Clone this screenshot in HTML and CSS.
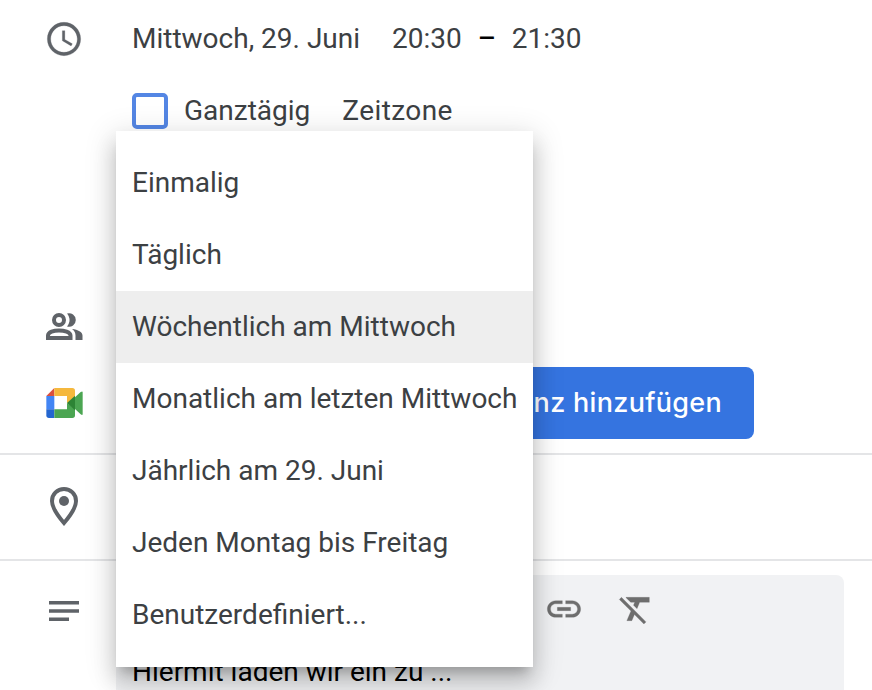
FILE: index.html
```html
<!DOCTYPE html>
<html lang="de">
<head>
<meta charset="utf-8">
<title>Termin</title>
<link rel="stylesheet" href="styles.css">
</head>
<body>
<main class="event">
  <section class="row when">
    <div class="icon"><svg class="bold" width="40" height="40" viewBox="0 0 24 24"><path d="M11.99 2C6.47 2 2 6.48 2 12s4.47 10 9.99 10C17.52 22 22 17.52 22 12S17.52 2 11.99 2zM12 20c-4.42 0-8-3.58-8-8s3.58-8 8-8 8 3.58 8 8-3.58 8-8 8z"/><path d="M12.5 7H11v6l5.25 3.15.75-1.23-4.5-2.67z"/></svg></div>
    <div class="content">
      <div class="times"><span class="date">Mittwoch, 29. Juni</span><span>20:30</span><span class="dash">–</span><span>21:30</span></div>
      <div class="options"><span class="checkbox"></span><span class="allday">Ganztägig</span><span class="zone">Zeitzone</span></div>
    </div>
  </section>
  <section class="row guests">
    <div class="icon"><svg width="37" height="27" viewBox="0 0 37 27"><g fill="none" stroke="#5f6368" stroke-width="4"><circle cx="13" cy="7" r="5"/><path d="M2 25v-2.500C2 18.800 8 17.400 13 17.400S24.500 18.800 24.500 22.500V25H2z"/></g><path d="M21 .5a6.800 6.800 0 1 1 0 13c3.400-4 3.400-9 0-13zM26 16c6 .6 10.500 3 10.500 6.500V27H29.500v-4.500c0-2.700-1.300-4.900-3.500-6.500z"/></svg></div>
  </section>
  <section class="row meet">
    <div class="icon"><svg width="37" height="30" viewBox="48 294 109 90"><path fill="#d9503f" d="M72 294v24H48z"/><path fill="#4285f4" d="M48 318h24v40H48z"/><path fill="#2466d0" d="M48 358h24v26H56q-8 0-8-8z"/><path fill="#f5b83d" d="M72 294h54q8 0 8 8v20l-24 18v-22H72z"/><path fill="#4ba552" d="M72 358h38v-19l24 18v19q0 8-8 8H72zM134 322l17-16q6-4 6 1v65q0 5-6 1l-17-16z"/><path fill="#2d8435" d="M110 339l24-22v44z"/></svg></div>
    <button class="add">nz hinzufügen</button>
  </section>
  <section class="row place">
    <div class="icon"><svg width="28" height="39" viewBox="0 0 28 39"><path fill="none" stroke="#5f6368" stroke-width="4" d="M14 2C7.400 2 2 7.200 2 13.900 2 21 8.400 29.500 14 36 19.600 29.500 26 21 26 13.900 26 7.200 20.600 2 14 2z"/><circle cx="14" cy="14" r="5"/></svg></div>
  </section>
  <section class="row notes">
    <div class="icon"><svg width="30" height="20" viewBox="0 0 30 20"><path d="M0 0h30v3.500H0zM0 8.200h30v3.600H0zM0 16.500h20V20H0z"/></svg></div>
    <div class="editor">
      <div class="tools">
        <svg class="bold" width="40" height="40" viewBox="0 0 24 24"><path d="M3.900 12c0-1.710 1.390-3.100 3.100-3.100h4V7H7c-2.760 0-5 2.240-5 5s2.240 5 5 5h4v-1.900H7c-1.710 0-3.100-1.390-3.100-3.100zM8 13h8v-2H8v2zm9-6h-4v1.900h4c1.710 0 3.100 1.390 3.100 3.100s-1.390 3.100-3.100 3.100h-4V17h4c2.760 0 5-2.240 5-5s-2.240-5-5-5z"/></svg>
        <svg class="bold" width="40" height="40" viewBox="0 0 24 24"><path d="M3.270 5L2 6.270l6.970 6.970L6.500 19h3l1.570-3.660L16.730 21 18 19.730 3.550 5.270 3.270 5zM6 5v.18L8.820 8h2.400l-.72 1.680 2.100 2.100L14.210 8H20V5H6z"/></svg>
      </div>
      <p class="text">Hiermit laden wir ein zu ...</p>
    </div>
  </section>
  <ul class="menu">
    <li>Einmalig</li>
    <li>Täglich</li>
    <li class="selected">Wöchentlich am Mittwoch</li>
    <li>Monatlich am letzten Mittwoch</li>
    <li>Jährlich am 29. Juni</li>
    <li>Jeden Montag bis Freitag</li>
    <li>Benutzerdefiniert...</li>
  </ul>
</main>
</body>
</html>
```
FILE: styles.css
```css
* { box-sizing: border-box; }
body { margin: 0; background: #fff; }
svg { display: block; fill: #5f6368; }
.bold { stroke: #5f6368; stroke-width: .15; }
.event {
  position: relative;
  width: 872px;
  height: 690px;
  overflow: hidden;
  font: 28px/40px Roboto, sans-serif;
  color: #3c4043;
}
.row { display: flex; align-items: center; }
.icon { flex: none; width: 128px; display: flex; justify-content: center; margin-right: 4px; }
.when { height: 291px; align-items: flex-start; padding-top: 19px; }
.times, .options { display: flex; align-items: center; height: 40px; white-space: pre; }
.times .date { margin-right: 32px; }
.dash { color: #000; margin: 0 16px; font-weight: 500; }
.options { margin-top: 32px; }
.checkbox { width: 36px; height: 36px; border: 4px solid #5486e4; border-radius: 5px; margin-right: 16px; }
.allday { margin-right: 32px; }
.zone { letter-spacing: .4px; }
.guests { height: 72px; padding-bottom: 1px; }
.meet { height: 92px; padding-bottom: 12px; border-bottom: 2px solid #e4e5e7; }
.meet .icon { padding: 2px 0 0 1px; }
.add {
  width: 622px;
  height: 72px;
  margin-top: 2px;
  padding: 0 32px;
  border: 0;
  border-radius: 8px;
  background: #3574e0;
  color: #fff;
  font: 500 27px/40px Inter, sans-serif;
  letter-spacing: .3px;
  text-align: right;
  white-space: nowrap;
}
.place { height: 106px; padding-bottom: 2px; border-bottom: 2px solid #e4e5e7; }
.notes { align-items: flex-start; padding-top: 14px; }
.notes .icon { margin-top: 26px; margin-right: -12px; }
.editor { width: 728px; height: 140px; border-radius: 8px 8px 0 0; background: #f1f2f4; }
.tools { display: flex; gap: 32px; padding: 14px 0 0 428px; }
.tools svg { fill: #6e6e6e; }
.tools .bold { stroke: #6e6e6e; }
.text { margin: 23px 0 0; padding-left: 16px; color: #000; }
.menu {
  position: absolute;
  left: 116px;
  top: 131px;
  width: 417px;
  height: 536px;
  margin: 0;
  padding: 16px 0;
  list-style: none;
  background: #fff;
  box-shadow: 0 16px 20px 2px rgba(0,0,0,.14), 0 6px 28px 4px rgba(0,0,0,.12), 0 10px 10px -6px rgba(0,0,0,.2);
}
.menu li { height: 72px; padding: 0 16px; line-height: 72px; white-space: nowrap; }
.menu .selected { background: #eee; }
```
